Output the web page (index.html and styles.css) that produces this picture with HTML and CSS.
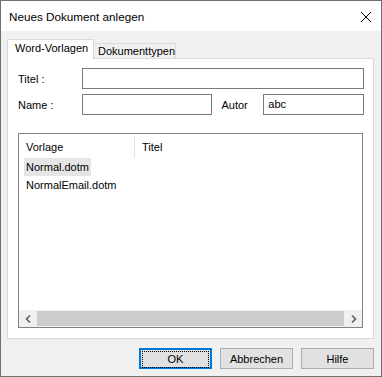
FILE: index.html
```html
<!DOCTYPE html>
<html lang="de">
  <head>
    <meta charset="UTF-8">
    <title>Neues Dokument anlegen</title>
    <link rel="stylesheet" href="styles.css">
  </head>
  <body>
    <div class="window">
      <div class="titlebar">
        <span class="title">Neues Dokument anlegen</span>
        <svg class="close" width="12" height="12" viewBox="0 0 12 12">
          <path d="M1 1L11 11M11 1L1 11" stroke="#000" stroke-width="1" fill="none"/>
        </svg>
      </div>
      <div class="client">
        <div class="tabs">
          <div class="tab active">Word-Vorlagen</div>
          <div class="tab">Dokumenttypen</div>
        </div>
        <div class="panel">
          <div class="row">
            <label class="lbl">Titel :</label>
            <div class="field wide"></div>
          </div>
          <div class="row">
            <label class="lbl">Name :</label>
            <div class="field name"></div>
            <label class="lbl autor">Autor</label>
            <div class="field author">abc</div>
          </div>
          <div class="list">
            <div class="list-head">
              <div class="col first">Vorlage</div>
              <div class="col">Titel</div>
            </div>
            <div class="list-body">
              <div class="item"><span class="sel">Normal.dotm</span></div>
              <div class="item"><span>NormalEmail.dotm</span></div>
            </div>
            <div class="hscroll">
              <div class="arrow">
                <svg width="6" height="8" viewBox="0 0 6 8"><path d="M5 0.5L1.5 4L5 7.5" stroke="#606060" stroke-width="1.6" fill="none"/></svg>
              </div>
              <div class="thumb"></div>
              <div class="arrow">
                <svg width="6" height="8" viewBox="0 0 6 8"><path d="M1 0.5L4.5 4L1 7.5" stroke="#606060" stroke-width="1.6" fill="none"/></svg>
              </div>
            </div>
          </div>
        </div>
        <div class="buttons">
          <button class="btn default"><span>OK</span></button>
          <button class="btn">Abbrechen</button>
          <button class="btn">Hilfe</button>
        </div>
      </div>
    </div>
  </body>
</html>
```
FILE: styles.css
```css
body { margin: 0; background: #fff; font-family: "Liberation Sans", Arial, sans-serif; font-size: 11px; color: #000; }
.window { width: 382px; height: 377px; box-sizing: border-box; border: 1px solid #6f6f6f; display: flex; flex-direction: column; background: #f0f0f0; }
.titlebar { height: 30px; background: #fff; display: flex; align-items: center; justify-content: space-between; padding: 0 9px 0 8px; }
.title { font-size: 11.7px; }
.close { margin-top: 1px; }
.client { flex: 1; padding: 8px 7px 0 6px; display: flex; flex-direction: column; }
.tabs { display: flex; align-items: flex-end; height: 19px; }
.tab { box-sizing: border-box; height: 15px; padding: 0 4px; border: 1px solid #d9d9d9; border-bottom: none; border-left: none; background: #f0f0f0; line-height: 14px; width: 82px; white-space: nowrap; }
.tab.active { height: 20px; width: 87px; border-left: 1px solid #d9d9d9; background: #fff; padding: 0 0 0 7px; line-height: 17px; margin-bottom: -1px; position: relative; z-index: 1; }
.panel { box-sizing: border-box; height: 281px; background: #fff; border: 1px solid #d9d9d9; padding: 9px 9px 0 10px; display: flex; flex-direction: column; gap: 5px; }
.row { display: flex; align-items: center; height: 21px; }
.lbl { width: 64px; }
.lbl.autor { width: 42px; margin-left: 9px; }
.field { box-sizing: border-box; height: 21px; border: 1px solid #7a7a7a; background: #fff; padding: 0 4px; line-height: 19px; }
.field.wide { width: 282px; }
.field.name { width: 131px; }
.field.author { width: 101px; }
.list { box-sizing: border-box; width: 345px; height: 195px; margin-top: 13px; border: 1px solid #828282; display: flex; flex-direction: column; }
.list-head { display: flex; height: 24px; align-items: center; padding-top: 2px; box-sizing: border-box; }
.col { padding-left: 7px; height: 22px; line-height: 22px; }
.col.first { width: 108px; border-right: 1px solid #e5e5e5; }
.list-body { flex: 1; padding: 0 0 0 5px; }
.item { height: 18px; line-height: 18px; }
.item span { padding: 0 2px; display: inline-block; }
.item .sel { background: #e5e5e5; }
.hscroll { height: 17px; display: flex; background: #f0f0f0; }
.arrow { width: 17px; display: flex; align-items: center; justify-content: center; }
.thumb { flex: 1; margin: 1px 1px; background: #cdcdcd; }
.buttons { display: flex; justify-content: flex-end; gap: 8px; padding-top: 9px; }
.btn { box-sizing: border-box; width: 73px; height: 21px; padding: 0; background: #e1e1e1; border: 1px solid #adadad; font-family: inherit; font-size: 11px; color: #000; }
.btn.default { border: 2px solid #0078d7; }
.btn.default span { display: block; margin: 1px; height: 15px; line-height: 15px; border: 1px dotted #000; }
```
